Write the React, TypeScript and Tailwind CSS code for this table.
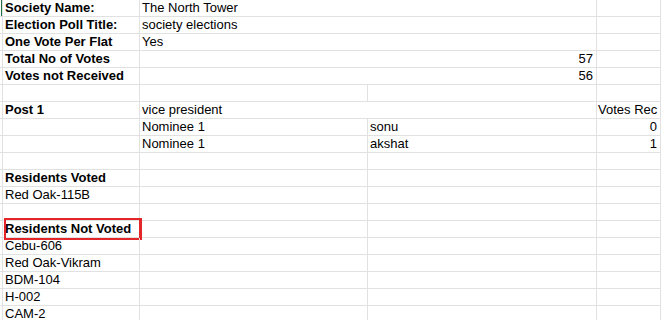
import React from 'react'

type Row = {
  a?: string
  b?: string
  c?: string
  d?: string
  boldA?: boolean
  merged?: boolean // B:C shown as one cell
  right?: boolean // value in C / merged cell aligned right
  dRight?: boolean
  marked?: boolean
  first?: boolean
}

const rows: Row[] = [
  { a: 'Society Name:', b: 'The North Tower', boldA: true, merged: true, first: true },
  { a: 'Election Poll Title:', b: 'society elections', boldA: true, merged: true },
  { a: 'One Vote Per Flat', b: 'Yes', boldA: true, merged: true },
  { a: 'Total No of Votes', b: '57', boldA: true, merged: true, right: true },
  { a: 'Votes not Received', b: '56', boldA: true, merged: true, right: true },
  {},
  { a: 'Post 1', b: 'vice president', d: 'Votes Rec', boldA: true, merged: true },
  { b: 'Nominee 1', c: 'sonu', d: '0', dRight: true },
  { b: 'Nominee 1', c: 'akshat', d: '1', dRight: true },
  {},
  { a: 'Residents Voted', boldA: true },
  { a: 'Red Oak-115B' },
  {},
  { a: 'Residents Not Voted', boldA: true, marked: true },
  { a: 'Cebu-606' },
  { a: 'Red Oak-Vikram' },
  { a: 'BDM-104' },
  { a: 'H-002' },
  { a: 'CAM-2' },
]

const cell = 'h-full border-r border-[#e1e1e1] px-[2px] whitespace-nowrap overflow-hidden'

function SheetRow({ row }: { row: Row }) {
  return (
    <div className="flex h-[17px] border-b border-[#e1e1e1]">
      <div className="w-px" />
      <div className={row.first ? 'w-px bg-[#217346]' : 'w-px'} />
      <div className={`${cell} relative w-[138px] border-l overflow-visible ${row.boldA ? 'font-bold' : ''}`}>
        {row.a}
        {row.marked && (
          <div className="absolute left-[1px] top-[-3px] h-[22px] w-[138px] border-2 border-r-[3px] border-[#e3262a]" />
        )}
      </div>
      {row.merged ? (
        <div className={`${cell} w-[457px] ${row.right ? 'text-right pr-[3px]' : ''}`}>{row.b}</div>
      ) : (
        <>
          <div className={`${cell} w-[228px]`}>{row.b}</div>
          <div className={`${cell} w-[229px]`}>{row.c}</div>
        </>
      )}
      <div className={`${cell} w-[64px] ${row.dRight ? 'text-right pr-[3px]' : 'pl-[1px]'}`}>{row.d}</div>
    </div>
  )
}

export default function App() {
  return (
    <div
      className="h-[320px] w-[661px] overflow-hidden bg-white text-[13px] leading-[16px] text-black"
      style={{ fontFamily: '"Liberation Sans", Arial, sans-serif' }}
    >
      {rows.map((r, i) => (
        <SheetRow key={i} row={r} />
      ))}
    </div>
  )
}
